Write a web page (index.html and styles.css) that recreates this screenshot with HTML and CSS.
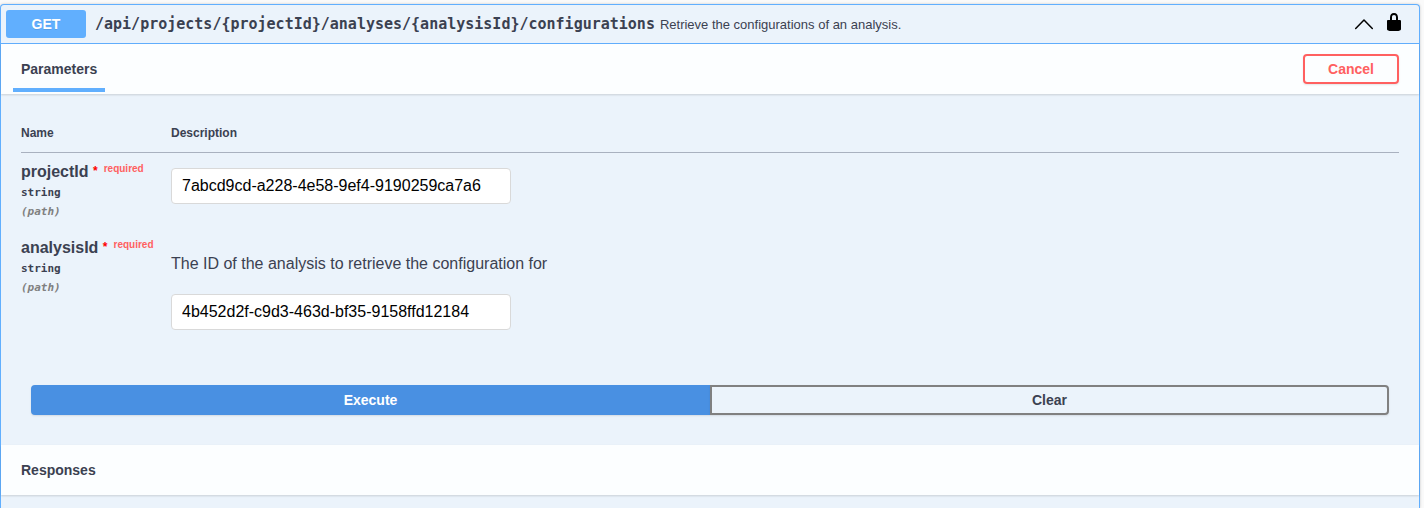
FILE: index.html
```html
<!DOCTYPE html>
<html lang="en">
<head>
<meta charset="utf-8">
<title>API documentation</title>
<link rel="stylesheet" href="styles.css">
</head>
<body>
<main class="opblock">
  <header class="summary">
    <span class="method">GET</span>
    <code class="path">/api/projects/{projectId}/analyses/{analysisId}/configurations</code>
    <span class="summary-text">Retrieve the configurations of an analysis.</span>
    <button class="icon-button" type="button" aria-label="Collapse operation">
      <svg class="icon" viewBox="0 0 20 20"><path d="M1.700 14.500 10 6 18.300 14.500" fill="none" stroke="#000" stroke-width="1.500" stroke-linecap="round" stroke-linejoin="round"/></svg>
    </button>
    <button class="icon-button" type="button" aria-label="Authorization locked">
      <svg class="icon" viewBox="0 2 20 20"><path fill="#000" d="M15.800 8H14V5.600C14 2.700 12.700 1 10 1 7.300 1 6 2.700 6 5.600V8H4c-.6 0-1 .6-1 1.200V17c0 .7.500 1.400 1.200 1.600l1.400.3h8.800l1.400-.3c.7-.2 1.200-.9 1.200-1.600V9.200C17 8.600 16.400 8 15.800 8zM12 8H8V5.200C8 3.700 8.700 3 10 3s2 .7 2 2.200V8z"/></svg>
    </button>
  </header>
  <section>
    <div class="section-header">
      <h4 class="section-title tab">Parameters</h4>
      <button class="cancel" type="button">Cancel</button>
    </div>
    <div class="parameters">
      <table class="parameter-table">
        <thead>
          <tr><th class="name-column">Name</th><th>Description</th></tr>
        </thead>
        <tbody>
          <tr>
            <td>
              <label class="parameter-name" for="project-id">projectId <span class="star">*</span><span class="required">required</span></label>
              <div class="parameter-type">string</div>
              <div class="parameter-in">(path)</div>
            </td>
            <td><input class="value" id="project-id" type="text" value="7abcd9cd-a228-4e58-9ef4-9190259ca7a6"></td>
          </tr>
          <tr>
            <td>
              <label class="parameter-name" for="analysis-id">analysisId <span class="star">*</span><span class="required">required</span></label>
              <div class="parameter-type">string</div>
              <div class="parameter-in">(path)</div>
            </td>
            <td>
              <p class="note">The ID of the analysis to retrieve the configuration for</p>
              <input class="value" id="analysis-id" type="text" value="4b452d2f-c9d3-463d-bf35-9158ffd12184">
            </td>
          </tr>
        </tbody>
      </table>
    </div>
    <div class="actions">
      <button class="action execute" type="button">Execute</button>
      <button class="action clear" type="button">Clear</button>
    </div>
  </section>
  <section>
    <div class="section-header">
      <h4 class="section-title">Responses</h4>
    </div>
  </section>
</main>
</body>
</html>
```
FILE: styles.css
```css
* {
  box-sizing: border-box;
}

body {
  margin: 0;
  padding: 4px 4px 0 0;
  background: #fafafa;
  color: #3b4151;
  font-family: "Liberation Sans", Arial, sans-serif;
}

button {
  font-family: inherit;
  cursor: pointer;
}

.opblock {
  min-height: calc(100vh - 4px);
  border: 1px solid #61affe;
  border-bottom: 0;
  border-radius: 4px 4px 0 0;
  background: #ebf3fb;
  box-shadow: 0 0 3px rgba(0, 0, 0, 0.19);
}

.summary {
  display: flex;
  align-items: center;
  padding: 5px 10px 5px 5px;
  border-bottom: 1px solid #61affe;
}

.method {
  width: 80px;
  border-radius: 3px;
  background: #61affe;
  color: #fff;
  font-size: 14px;
  font-weight: 700;
  line-height: 28px;
  text-align: center;
  text-shadow: 0 1px 0 rgba(0, 0, 0, 0.1);
}

.path {
  padding: 0 5px 0 9px;
  font-family: "DejaVu Sans Mono", monospace;
  font-size: 15px;
  font-weight: 700;
}

.summary-text {
  flex: 1;
  font-size: 13px;
}

.icon-button {
  display: flex;
  padding: 0 5px;
  border: 0;
  background: none;
}

.icon {
  width: 20px;
  height: 20px;
  overflow: visible;
}

.section-header {
  display: flex;
  align-items: center;
  justify-content: space-between;
  height: 50px;
  padding: 0 20px 0 12px;
  background: rgba(255, 255, 255, 0.85);
  box-shadow: 0 1px 2px rgba(0, 0, 0, 0.15);
}

.section-title {
  margin: 0;
  padding: 0 8px;
  font-size: 14px;
  line-height: 38px;
}

.tab {
  align-self: flex-end;
  margin-bottom: 2px;
  border-bottom: 4px solid #61affe;
}

.cancel {
  width: 96px;
  height: 30px;
  padding: 0;
  border: 2px solid #ff6060;
  border-radius: 4px;
  background: transparent;
  box-shadow: 0 1px 2px rgba(0, 0, 0, 0.1);
  color: #ff6060;
  font-size: 14px;
  font-weight: 700;
}

.parameters {
  padding: 20px;
}

.parameter-table {
  width: 100%;
  border-collapse: collapse;
}

.parameter-table th {
  padding: 11px 0;
  border-bottom: 1px solid #a9b1bf;
  font-size: 12px;
  line-height: 16px;
  text-align: left;
}

.name-column {
  width: 150px;
}

.parameter-table td {
  padding: 10px 0 0;
  vertical-align: top;
}

.parameter-name {
  display: block;
  font-size: 16px;
  font-weight: 700;
  line-height: 18px;
  white-space: nowrap;
}

.star {
  color: #f00;
  font-size: 12px;
  line-height: 12px;
  vertical-align: 2px;
}

.required {
  padding-left: 6px;
  color: #ff6060;
  font-size: 10px;
  line-height: 10px;
  vertical-align: 5px;
}

.parameter-type,
.parameter-in {
  font-family: "DejaVu Sans Mono", monospace;
  font-size: 11px;
  font-weight: 700;
  line-height: 14px;
}

.parameter-type {
  padding: 5px 0;
}

.parameter-in {
  padding-bottom: 10px;
  color: #808080;
  font-style: italic;
}

.value {
  display: block;
  width: 340px;
  height: 36px;
  margin: 5px 0 10px;
  padding: 0 10px;
  border: 1px solid #d9d9d9;
  border-radius: 4px;
  background: #fff;
  color: #000;
  font-family: inherit;
  font-size: 16px;
}

.note {
  margin: 15px 0 20px;
  font-size: 16px;
  line-height: 20px;
}

.actions {
  display: flex;
  padding: 25px 30px 30px;
}

.action {
  flex: 1;
  height: 30px;
  padding: 0;
  border: 2px solid #808080;
  background: transparent;
  box-shadow: 0 1px 2px rgba(0, 0, 0, 0.1);
  color: #3b4151;
  font-size: 14px;
  font-weight: 700;
}

.execute {
  border-color: #4990e2;
  border-radius: 4px 0 0 4px;
  background: #4990e2;
  color: #fff;
}

.clear {
  border-radius: 0 4px 4px 0;
}
```
